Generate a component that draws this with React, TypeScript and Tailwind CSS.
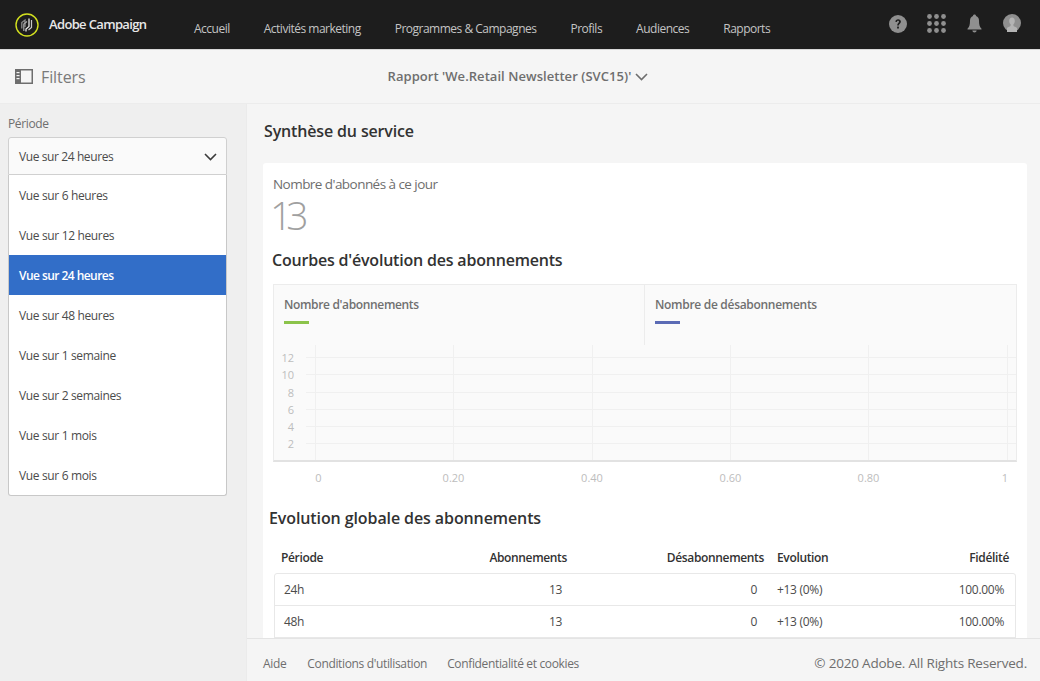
const navItems = [
  "Accueil",
  "Activités marketing",
  "Programmes & Campagnes",
  "Profils",
  "Audiences",
  "Rapports",
];

const periods = [
  "Vue sur 6 heures",
  "Vue sur 12 heures",
  "Vue sur 24 heures",
  "Vue sur 48 heures",
  "Vue sur 1 semaine",
  "Vue sur 2 semaines",
  "Vue sur 1 mois",
  "Vue sur 6 mois",
];

const rows = [
  { period: "24h", subs: "13", unsubs: "0", evolution: "+13 (0%)", loyalty: "100.00%" },
  { period: "48h", subs: "13", unsubs: "0", evolution: "+13 (0%)", loyalty: "100.00%" },
];

const xTicks = [
  { label: "0", x: 41.5, textX: 44.5 },
  { label: "0.20", x: 179.5, textX: 179.5 },
  { label: "0.40", x: 318.5, textX: 318 },
  { label: "0.60", x: 456.5, textX: 456.5 },
  { label: "0.80", x: 594.5, textX: 594.5 },
  { label: "1", x: 733.5, textX: 731 },
];

const yTicks = [
  { label: "12", y: 12 },
  { label: "10", y: 29 },
  { label: "8", y: 47 },
  { label: "6", y: 64 },
  { label: "4", y: 81 },
  { label: "2", y: 98 },
];

function Logo() {
  return (
    <svg width="24" height="24" viewBox="0 0 24 24" fill="none">
      <circle cx="12" cy="12" r="11" stroke="#d3e01f" strokeWidth="1.4" />
      <path d="M6.8 15.5V9.5L10 7V14" stroke="#8a8a8a" strokeWidth="1.3" />
      <path d="M8.8 18V11L12 8.5" stroke="#a8a8a8" strokeWidth="1.2" />
      <path d="M14 5.5V13.5L11 16V18.5" stroke="#e8e8e8" strokeWidth="1.3" />
      <path d="M16.5 7V14.5L13.5 17" stroke="#c8c8c8" strokeWidth="1.2" />
    </svg>
  );
}

function HelpIcon() {
  return (
    <svg width="18" height="18" viewBox="0 0 18 18">
      <circle cx="9" cy="9" r="9" fill="#8f8f8f" />
      <path
        d="M6.3 6.8C6.4 5.2 7.6 4.3 9.1 4.3C10.7 4.3 11.9 5.2 11.9 6.7C11.9 8.5 9.8 8.7 9.8 10.6H8.2C8.2 8.2 10 8 10 6.8C10 6.1 9.6 5.7 9 5.7C8.4 5.7 8 6.2 8 6.9Z"
        fill="#1d1d1d"
      />
      <rect x="8.1" y="11.6" width="1.8" height="1.9" fill="#1d1d1d" />
    </svg>
  );
}

function AppsIcon() {
  const dots = [2.5, 9.5, 16.5];
  return (
    <svg width="19" height="19" viewBox="0 0 19 19" fill="#8f8f8f">
      {dots.map((y) =>
        dots.map((x) => <circle key={`${x}-${y}`} cx={x} cy={y} r="2.4" />)
      )}
    </svg>
  );
}

function BellIcon() {
  return (
    <svg width="15" height="19" viewBox="0 0 15 19" fill="#8f8f8f" className="ml-[1px]">
      <path d="M7.5 0.5C8.4 0.5 9 1.1 9 1.9C11 2.6 12 4.3 12 6.6C12 10.5 12.6 13 14.5 14.8V15.5H0.5V14.8C2.4 13 3 10.5 3 6.6C3 4.3 4 2.6 6 1.9C6 1.1 6.6 0.5 7.5 0.5Z" />
      <path d="M5.3 16.5H9.7C9.5 17.8 8.6 18.5 7.5 18.5C6.4 18.5 5.5 17.8 5.3 16.5Z" />
    </svg>
  );
}

function AvatarIcon() {
  return (
    <svg width="18" height="18" viewBox="0 0 18 18" className="ml-[1px] -translate-y-[1px]">
      <circle cx="9" cy="9" r="9" fill="#8f8f8f" />
      <path
        d="M9 3.6C10.7 3.6 11.8 5 11.8 6.9C11.8 8.4 11.2 9.6 10.4 10.3V11.4C10.4 12.4 13 12.8 14 14V18H4V14C5 12.8 7.6 12.4 7.6 11.4V10.3C6.8 9.6 6.2 8.4 6.2 6.9C6.2 5 7.3 3.6 9 3.6Z"
        fill="#b4b4b4"
      />
    </svg>
  );
}

function PanelIcon() {
  return (
    <svg width="18" height="15" viewBox="0 0 18 15">
      <rect x="0.75" y="0.75" width="16.5" height="13.5" fill="none" stroke="#6e6e6e" strokeWidth="1.5" />
      <rect x="0" y="0" width="6" height="15" fill="#6e6e6e" />
      <rect x="1.5" y="3" width="3" height="1.2" fill="#f5f5f5" />
      <rect x="1.5" y="6" width="3" height="1.2" fill="#f5f5f5" />
      <rect x="1.5" y="9" width="3" height="1.2" fill="#f5f5f5" />
    </svg>
  );
}

function Chevron({ color }: { color: string }) {
  return (
    <svg width="13" height="8" viewBox="0 0 13 8" fill="none">
      <path d="M1 1L6.5 6.5L12 1" stroke={color} strokeWidth="1.6" />
    </svg>
  );
}

function Plot() {
  return (
    <svg width="742" height="115" viewBox="0 0 742 115" className="block">
      <rect width="742" height="115" fill="#fafafa" />
      {yTicks.map((t) => (
        <g key={t.label}>
          <line x1="32" x2="742" y1={t.y + 0.5} y2={t.y + 0.5} stroke="#f0f0f0" />
          <text x="20" y={t.y + 5} fontSize="11" fill="#bdbdbd" textAnchor="end" fontFamily="'Open Sans', sans-serif">
            {t.label}
          </text>
        </g>
      ))}
      {xTicks.map((t) => (
        <line key={t.label} x1={t.x} x2={t.x} y1="0" y2="115" stroke="#f0f0f0" />
      ))}
    </svg>
  );
}

function XAxis() {
  return (
    <svg width="742" height="27" viewBox="0 0 742 27" className="ml-[1px] block">
      {xTicks.map((t) => (
        <text key={t.label} x={t.textX} y="20" fontSize="11" fill="#bdbdbd" textAnchor="middle" fontFamily="'Open Sans', sans-serif">
          {t.label}
        </text>
      ))}
    </svg>
  );
}

export default function App() {
  return (
    <div className="flex h-[681px] w-[1040px] flex-col overflow-hidden bg-[#f5f5f5] font-['Open_Sans',sans-serif] text-[12px] text-[#4b4b4b]">
      <header className="flex h-[50px] shrink-0 items-center border-b border-[#d8d8d8] bg-[#1d1d1d]">
        <div className="ml-[15px] flex w-[179px] shrink-0 items-center gap-[10px]">
          <Logo />
          <span className="text-[13px] font-semibold tracking-[-0.65px] text-[#e8e8e8]">Adobe Campaign</span>
        </div>
        <nav className="flex gap-[34px] pt-[9px]">
          {navItems.map((item) => (
            <a key={item} className="text-[12px] tracking-[-0.5px] text-[#c4c4c4]">
              {item}
            </a>
          ))}
        </nav>
        <div className="ml-auto mr-[19px] flex items-center gap-[20px] pb-[2px]">
          <HelpIcon />
          <AppsIcon />
          <BellIcon />
          <AvatarIcon />
        </div>
      </header>

      <div className="grid h-[54px] shrink-0 grid-cols-[1fr_auto_1fr] items-center border-b border-[#ececec] pr-[4px]">
        <div className="ml-[15px] flex items-center gap-[8px]">
          <PanelIcon />
          <span className="text-[16px] tracking-[-0.1px] text-[#7a7a7a]">Filters</span>
        </div>
        <div className="flex items-center gap-[4px]">
          <span className="text-[13px] font-semibold tracking-[0.05px] text-[#6e6e6e]">
            Rapport 'We.Retail Newsletter (SVC15)'
          </span>
          <Chevron color="#6e6e6e" />
        </div>
        <div />
      </div>

      <div className="flex min-h-0 flex-1">
        <aside className="w-[247px] shrink-0 border-r border-[#ebebeb] bg-[#efefef] pl-[8px] pr-[19px] pt-[12px]">
          <label className="block text-[12px] leading-[16px] tracking-[-0.35px] text-[#6e6e6e]">Période</label>
          <div className="relative mt-[5px]">
            <button className="flex h-[38px] w-full items-center justify-between rounded-t-[3px] border border-[#d0d0d0] bg-[#fafafa] pl-[10px] pr-[9px] pt-[1px] text-[12px] tracking-[-0.4px] text-[#4b4b4b]">
              Vue sur 24 heures
              <Chevron color="#3c3c3c" />
            </button>
            <ul className="absolute left-0 right-0 top-[38px] rounded-b-[3px] border border-t-0 border-[#c8c8c8] bg-white">
              {periods.map((p) => (
                <li
                  key={p}
                  className={
                    p === "Vue sur 24 heures"
                      ? "flex h-[40px] items-center bg-[#326ec8] pl-[10px] pt-[1px] font-semibold tracking-[-0.55px] text-white"
                      : "flex h-[40px] items-center pl-[10px] pt-[1px] tracking-[-0.35px] text-[#4b4b4b]"
                  }
                >
                  {p}
                </li>
              ))}
            </ul>
          </div>
        </aside>

        <div className="flex min-w-0 flex-1 flex-col">
          <main className="min-h-0 flex-1 overflow-hidden pl-[16px] pr-[13px]">
            <h1 className="ml-[1px] mt-[16px] text-[16px] font-semibold leading-[22px] tracking-[-0.15px] text-[#323232]">
              Synthèse du service
            </h1>
            <section className="mt-[21px] rounded-t-[3px] bg-white pl-[11px] pr-[11px] pt-[12px]">
              <p className="-ml-[1px] text-[13.5px] leading-[18px] tracking-[-0.55px] text-[#6e6e6e]">
                Nombre d'abonnés à ce jour
              </p>
              <p className="-ml-[4px] mt-[3px] text-[39px] font-light leading-[38px] tracking-[-6px] text-[#a0a0a0]">13</p>
              <h2 className="-ml-[2px] mt-[15px] text-[16px] font-semibold leading-[22px] tracking-[-0.2px] text-[#323232]">
                Courbes d'évolution des abonnements
              </h2>

              <div className="-mx-[1px] mt-[13px]">
                <div className="border-x border-b-2 border-t border-x-[#ececec] border-b-[#e2e2e2] border-t-[#ececec]">
                  <div className="flex h-[60px] bg-[#fafafa]">
                    <div className="w-[371px] border-r border-[#ececec] pl-[10px] pt-[12px]">
                      <p className="text-[12px] font-semibold leading-[16px] tracking-[-0.35px] text-[#707070]">
                        Nombre d'abonnements
                      </p>
                      <div className="mt-[8px] h-[3px] w-[25px] bg-[#8bc34a]" />
                    </div>
                    <div className="pl-[10px] pt-[12px]">
                      <p className="text-[12px] font-semibold leading-[16px] tracking-[-0.3px] text-[#707070]">
                        Nombre de désabonnements
                      </p>
                      <div className="mt-[8px] h-[3px] w-[25px] bg-[#5b6bb5]" />
                    </div>
                  </div>
                  <Plot />
                </div>
                <XAxis />
              </div>

              <h2 className="-ml-[5px] mt-[18px] text-[16px] font-semibold leading-[22px] tracking-[-0.1px] text-[#323232]">
                Evolution globale des abonnements
              </h2>

              <div className="mt-[14px] grid h-[30px] grid-cols-[150px_143px_197px_130px_122px] items-center text-[12px] font-semibold tracking-[-0.35px] text-[#323232]">
                <span className="pl-[7px]">Période</span>
                <span className="text-right">Abonnements</span>
                <span className="text-right">Désabonnements</span>
                <span className="pl-[13px]">Evolution</span>
                <span className="pr-[7px] text-right">Fidélité</span>
              </div>
              <div className="rounded-t-[3px] border border-[#e8e8e8]">
                {rows.map((r) => (
                  <div
                    key={r.period}
                    className="grid h-[32px] grid-cols-[149px_143px_197px_130px_121px] items-center border-b border-[#e8e8e8] pt-[1px] text-[12px] tracking-[-0.3px] text-[#4b4b4b]"
                  >
                    <span className="pl-[9px]">{r.period}</span>
                    <span className="pr-[5px] text-right">{r.subs}</span>
                    <span className="pr-[7px] text-right">{r.unsubs}</span>
                    <span className="pl-[13px]">{r.evolution}</span>
                    <span className="pr-[11px] text-right">{r.loyalty}</span>
                  </div>
                ))}
              </div>
            </section>
          </main>

          <footer className="flex h-[43px] shrink-0 items-center border-t border-[#e4e4e4] bg-[#f5f5f5] pl-[16px] pr-[13px] pt-[7px] text-[12px] tracking-[-0.35px] text-[#6e6e6e]">
            <a>Aide</a>
            <a className="ml-[21px]">Conditions d'utilisation</a>
            <a className="ml-[20px]">Confidentialité et cookies</a>
            <span className="ml-auto text-[13.5px] tracking-[-0.2px]">© 2020 Adobe. All Rights Reserved.</span>
          </footer>
        </div>
      </div>
    </div>
  );
}
